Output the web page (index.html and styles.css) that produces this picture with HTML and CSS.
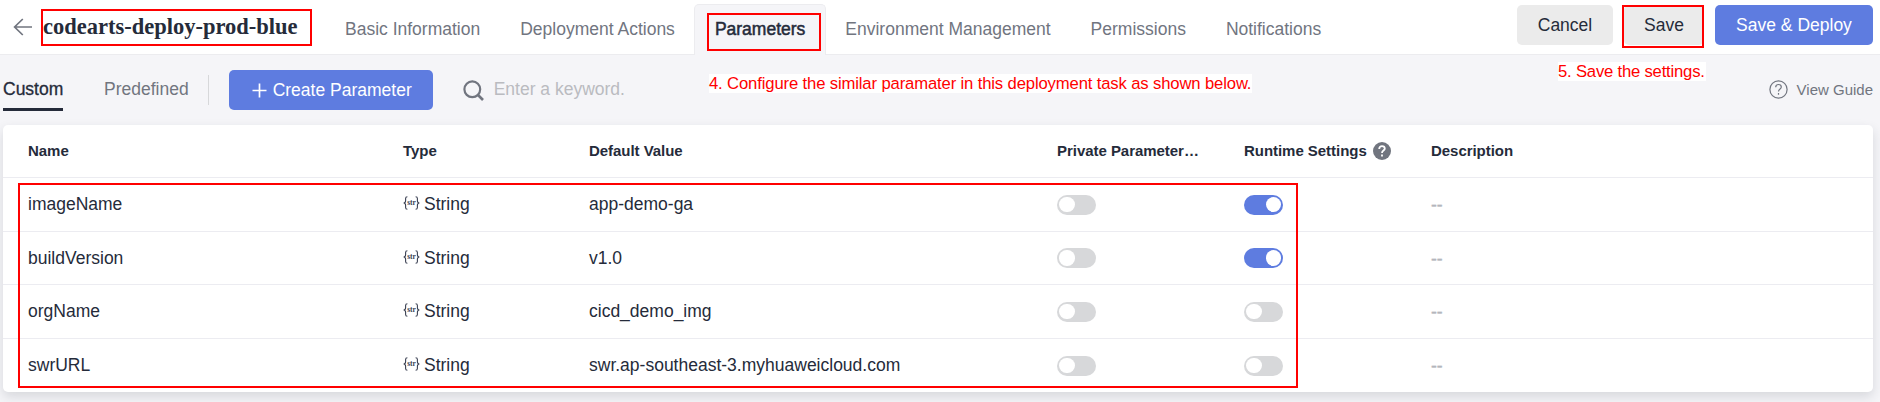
FILE: index.html
```html
<!DOCTYPE html>
<html lang="en">
<head>
<meta charset="utf-8">
<title>codearts-deploy-prod-blue</title>
<link rel="stylesheet" href="styles.css">
</head>
<body>
<header class="header">
  <svg class="back" width="20" height="18" viewBox="0 0 20 18"><path d="M19 9H1.6M9.8 1 1.6 9l8.2 8" fill="none" stroke="#71757f" stroke-width="1.7"/></svg>
  <h1 class="title">codearts-deploy-prod-blue</h1>
  <nav class="nav">
    <a class="nav-item">Basic Information</a>
    <a class="nav-item">Deployment Actions</a>
    <a class="nav-item nav-active">Parameters</a>
    <a class="nav-item">Environment Management</a>
    <a class="nav-item">Permissions</a>
    <a class="nav-item">Notifications</a>
  </nav>
  <div class="actions">
    <button class="btn btn-cancel">Cancel</button>
    <button class="btn btn-save">Save</button>
    <button class="btn btn-primary btn-deploy">Save &amp; Deploy</button>
  </div>
</header>
<section class="toolbar">
  <a class="sub sub-active">Custom</a>
  <a class="sub">Predefined</a>
  <span class="divider"></span>
  <button class="btn btn-primary btn-create">
    <svg width="15" height="15" viewBox="0 0 15 15"><path d="M7.5.5v14M.5 7.5h14" stroke="#fff" stroke-width="1.7"/></svg>
    Create Parameter
  </button>
  <svg class="search" width="22" height="22" viewBox="0 0 22 22"><circle cx="9.3" cy="9.3" r="7.9" fill="none" stroke="#71757f" stroke-width="2.2"/><path d="m15 15 5 5" stroke="#71757f" stroke-width="2.6"/></svg>
  <span class="placeholder">Enter a keyword.</span>
  <a class="guide">
    <svg width="19" height="19" viewBox="0 0 19 19" fill="none" stroke="#71757f" stroke-width="1.2"><circle cx="9.5" cy="9.5" r="8.6"/><path d="M6.7 7.3c0-1.8 1.2-2.8 2.8-2.8s2.8 1 2.8 2.5c0 2-2.8 2-2.8 4.6M9.5 13v1.7"/></svg>
    View Guide
  </a>
</section>
<main class="card">
  <div class="row head">
    <span>Name</span><span>Type</span><span>Default Value</span><span>Private Parameter…</span>
    <span class="with-help">Runtime Settings
      <svg width="18" height="18" viewBox="0 0 18 18"><circle cx="9" cy="9" r="9" fill="#71757f"/><path d="M6.2 7c0-1.8 1.2-2.9 2.8-2.9s2.8 1 2.8 2.5c0 2-2.8 2-2.8 4.3M9 12.4v2" fill="none" stroke="#fff" stroke-width="1.8"/></svg>
    </span>
    <span>Description</span>
  </div>
  <div class="row">
    <span>imageName</span>
    <span class="type"><svg class="str" width="17" height="14" viewBox="0 0 17 14"><path d="M4.4.7C2.9.7 2.6 1.3 2.6 2.6v2.2C2.6 6.2 2.1 7 .6 7c1.5 0 2 .8 2 2.2v2.2c0 1.3.3 1.9 1.8 1.9M12.6.7c1.5 0 1.8.6 1.8 1.9v2.2c0 1.4.5 2.2 2 2.2-1.5 0-2 .8-2 2.2v2.2c0 1.3-.3 1.9-1.8 1.9"/><text x="8.5" y="9.3">str</text></svg>String</span>
    <span>app-demo-ga</span>
    <span><i class="switch"></i></span><span><i class="switch on"></i></span><span class="empty">--</span>
  </div>
  <div class="row">
    <span>buildVersion</span>
    <span class="type"><svg class="str" width="17" height="14" viewBox="0 0 17 14"><path d="M4.4.7C2.9.7 2.6 1.3 2.6 2.6v2.2C2.6 6.2 2.1 7 .6 7c1.5 0 2 .8 2 2.2v2.2c0 1.3.3 1.9 1.8 1.9M12.6.7c1.5 0 1.8.6 1.8 1.9v2.2c0 1.4.5 2.2 2 2.2-1.5 0-2 .8-2 2.2v2.2c0 1.3-.3 1.9-1.8 1.9"/><text x="8.5" y="9.3">str</text></svg>String</span>
    <span>v1.0</span>
    <span><i class="switch"></i></span><span><i class="switch on"></i></span><span class="empty">--</span>
  </div>
  <div class="row">
    <span>orgName</span>
    <span class="type"><svg class="str" width="17" height="14" viewBox="0 0 17 14"><path d="M4.4.7C2.9.7 2.6 1.3 2.6 2.6v2.2C2.6 6.2 2.1 7 .6 7c1.5 0 2 .8 2 2.2v2.2c0 1.3.3 1.9 1.8 1.9M12.6.7c1.5 0 1.8.6 1.8 1.9v2.2c0 1.4.5 2.2 2 2.2-1.5 0-2 .8-2 2.2v2.2c0 1.3-.3 1.9-1.8 1.9"/><text x="8.5" y="9.3">str</text></svg>String</span>
    <span>cicd_demo_img</span>
    <span><i class="switch"></i></span><span><i class="switch"></i></span><span class="empty">--</span>
  </div>
  <div class="row">
    <span>swrURL</span>
    <span class="type"><svg class="str" width="17" height="14" viewBox="0 0 17 14"><path d="M4.4.7C2.9.7 2.6 1.3 2.6 2.6v2.2C2.6 6.2 2.1 7 .6 7c1.5 0 2 .8 2 2.2v2.2c0 1.3.3 1.9 1.8 1.9M12.6.7c1.5 0 1.8.6 1.8 1.9v2.2c0 1.4.5 2.2 2 2.2-1.5 0-2 .8-2 2.2v2.2c0 1.3-.3 1.9-1.8 1.9"/><text x="8.5" y="9.3">str</text></svg>String</span>
    <span>swr.ap-southeast-3.myhuaweicloud.com</span>
    <span><i class="switch"></i></span><span><i class="switch"></i></span><span class="empty">--</span>
  </div>
</main>
<!-- Walkthrough annotations lying over the page -->
<div class="mark mark-title"></div>
<div class="mark mark-tab"></div>
<div class="mark mark-save"></div>
<div class="mark mark-table"></div>
<p class="note note-configure">4. Configure the similar paramater in this deployment task as shown below.</p>
<p class="note note-save">5. Save the settings.</p>
</body>
</html>
```
FILE: styles.css
```css
* { box-sizing: border-box; }
body {
  margin: 0;
  height: 402px;
  overflow: hidden;
  position: relative;
  background: #f5f5f8;
  color: #252b3a;
  font: 17.5px/20px "Liberation Sans", Arial, sans-serif;
  white-space: nowrap;
}
svg { display: block; flex: none; }

.header {
  display: flex;
  height: 55px;
  padding: 0 7px 0 13px;
  background: #fff;
  border-bottom: 1px solid #ececef;
}
.back { margin-top: 18px; }
.title {
  width: 292px;
  margin: 13px 0 0;
  padding-left: 10px;
  font: bold 22.5px/28px "Liberation Serif", "Times New Roman", serif;
}
.nav { display: flex; height: 51px; margin-top: 4px; }
.nav-item { padding: 0 20px; color: #71757f; line-height: 50px; }
.nav-active {
  margin: 0 -1px;
  background: #f5f5f8;
  border: 1px solid #ececef;
  border-bottom: 0;
  border-radius: 5px 5px 0 0;
  color: #252b3a;
  line-height: 48px;
  -webkit-text-stroke: 0.5px #252b3a;
}
.actions { display: flex; margin: 5px 0 0 auto; }
.btn {
  height: 40px;
  padding: 0;
  border: 0;
  border-radius: 5px;
  background: #ebebeb;
  color: #252b3a;
  font: inherit;
}
.btn-primary { background: #5e7ce0; color: #fff; }
.btn-cancel { width: 96px; margin-right: 11px; }
.btn-save { width: 80px; margin-right: 11px; }
.btn-deploy { width: 158px; }

.toolbar {
  display: flex;
  align-items: center;
  height: 70px;
  padding: 0 7px 0 3px;
}
.sub { height: 42px; margin-right: 40px; line-height: 40px; color: #71757f; border-bottom: 3px solid transparent; }
.sub-active { color: #252b3a; border-color: #252b3a; -webkit-text-stroke: 0.3px #252b3a; width: 60px; margin-right: 41px; }
.sub + .divider { margin-left: -21px; }
.divider { width: 1px; height: 30px; background: #d7d8da; }
.btn-create { display: flex; align-items: center; gap: 6px; width: 204px; margin-left: 20px; padding-left: 23px; }
.search { margin: 1px 0 0 30px; }
.placeholder { margin: -2px 0 0 9px; color: #babbc0; }
.guide { display: flex; align-items: center; gap: 9px; margin-left: auto; color: #71757f; font-size: 15px; }
.guide svg { margin-top: -2px; }

.card {
  margin: 0 7px 0 3px;
  height: 267px;
  background: #fff;
  border-radius: 5px;
  box-shadow: 0 5px 12px rgba(37, 43, 58, 0.14);
}
.row {
  display: grid;
  grid-template-columns: 375px 186px 468px 187px 187px 1fr;
  align-items: center;
  height: 53.5px;
  padding-left: 25px;
  border-bottom: 1px solid #ececf1;
}
.row:last-child { border-bottom: 0; }
.head { height: 53px; font-size: 15px; font-weight: bold; letter-spacing: -0.04px; }
.with-help { display: flex; align-items: center; gap: 6px; }
.type { display: flex; align-items: center; gap: 4px; }
.str { margin-top: -2px; }
.str path { fill: none; stroke: #3a4052; stroke-width: 1.1; }
.str text { font: bold 7.5px "Liberation Serif", serif; fill: #3a4052; text-anchor: middle; }
.empty { padding-top: 2px; color: #b4b6bc; -webkit-text-stroke: 0.4px #b4b6bc; }
.switch {
  display: block;
  width: 39px;
  height: 20px;
  margin-top: 1px;
  padding: 2px;
  border-radius: 10px;
  background: #d7d8da;
}
.switch::before { content: ""; display: block; width: 15.5px; height: 15.5px; border-radius: 50%; background: #fff; }
.switch.on { background: #5e7ce0; }
.switch.on::before { margin-left: auto; }

.mark { position: absolute; border: 2px solid #f00; }
.mark-title { left: 41px; top: 9px; width: 271px; height: 37px; }
.mark-tab { left: 707px; top: 13px; width: 114px; height: 38px; }
.mark-save { left: 1622px; top: 5px; width: 82px; height: 43px; }
.mark-table { left: 18px; top: 183px; width: 1280px; height: 205px; }
.note {
  position: absolute;
  margin: 0;
  background: #fff;
  color: #f00;
  font-size: 16.67px;
  line-height: 19px;
}
.note-configure { left: 709px; top: 74px; width: 543px; letter-spacing: -0.14px; }
.note-save { left: 1558px; top: 62px; width: 148px; letter-spacing: -0.2px; }
```
